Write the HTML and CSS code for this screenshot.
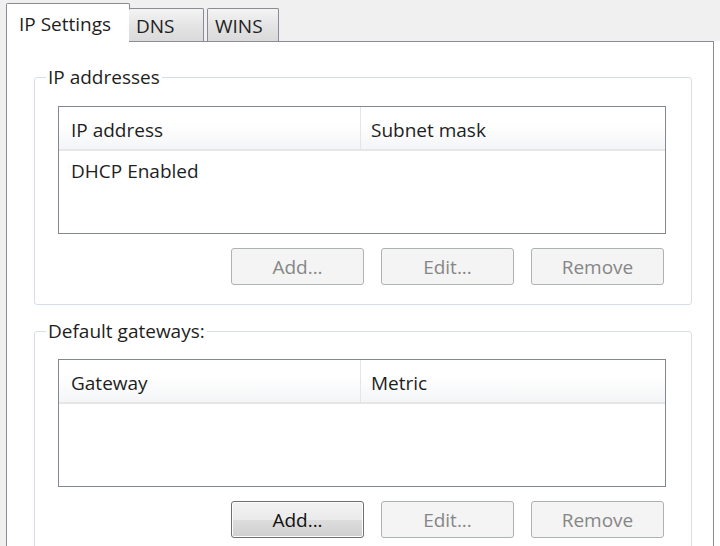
FILE: index.html
```html
<!DOCTYPE html>
<html>
<head>
<meta charset="utf-8">
<link rel="stylesheet" href="styles.css">
</head>
<body>
<div class="window">
  <div class="tabs">
    <div class="tab tab-selected">IP Settings</div>
    <div class="tab tab-dns">DNS</div>
    <div class="tab tab-wins">WINS</div>
  </div>
  <div class="main">
    <div class="panel">
      <fieldset class="group group-ip">
        <legend>IP addresses</legend>
        <div class="list">
          <div class="list-head">
            <div class="col col1">IP address</div>
            <div class="col col2">Subnet mask</div>
          </div>
          <div class="list-body">
            <div class="row">DHCP Enabled</div>
          </div>
        </div>
        <div class="buttons">
          <button class="btn" disabled>Add...</button>
          <button class="btn" disabled>Edit...</button>
          <button class="btn" disabled>Remove</button>
        </div>
      </fieldset>
      <fieldset class="group group-gw">
        <legend>Default gateways:</legend>
        <div class="list">
          <div class="list-head">
            <div class="col col1">Gateway</div>
            <div class="col col2">Metric</div>
          </div>
          <div class="list-body"></div>
        </div>
        <div class="buttons">
          <button class="btn btn-active">Add...</button>
          <button class="btn" disabled>Edit...</button>
          <button class="btn" disabled>Remove</button>
        </div>
      </fieldset>
    </div>
  </div>
</div>
</body>
</html>
```
FILE: styles.css
```css
html, body {
  margin: 0;
  padding: 0;
}
body {
  background: #ffffff;
  font-family: "Open Sans", "Noto Sans", "DejaVu Sans", sans-serif;
  font-size: 19px;
  color: #1e1e1e;
}
.window {
  width: 720px;
  height: 546px;
  overflow: hidden;
  display: flex;
  flex-direction: column;
}
.tabs {
  height: 41px;
  flex: none;
  background: #f0f0f0;
  display: flex;
  align-items: flex-end;
  padding-left: 6px;
  position: relative;
  z-index: 1;
}
.tab {
  box-sizing: border-box;
  height: 33px;
  border: 1px solid #898c95;
  border-bottom: none;
  border-radius: 2px 2px 0 0;
  background: linear-gradient(#f4f4f4, #e3e3e3 55%, #dadada);
  padding-left: 7px;
  line-height: 34px;
  white-space: nowrap;
}
.tab-selected {
  width: 124px;
  height: 39px;
  margin-bottom: -1px;
  background: #ffffff;
  padding-left: 12px;
  line-height: 40px;
}
.tab-dns {
  width: 75px;
  margin-left: -1px;
  border-left: none;
}
.tab-wins {
  width: 72px;
  margin-left: 3px;
}
.main {
  flex: 1;
  background: linear-gradient(90deg, #f0f0f0 0, #f0f0f0 6px, #ffffff 6px);
  padding-left: 6px;
}
.panel {
  box-sizing: border-box;
  width: 708px;
  height: 100%;
  background: #ffffff;
  border: 1px solid #898c95;
  padding-left: 27px;
  padding-top: 24px;
}
.group {
  box-sizing: border-box;
  width: 658px;
  margin: 0;
  padding: 0 0 19px 23px;
  border: 1px solid #d5dfe5;
  border-radius: 3px;
  min-width: 0;
}
.group legend {
  margin-left: -12px;
  padding: 0 2px;
  line-height: 22px;
  color: #1e1e1e;
}
.group-gw {
  margin-top: 15px;
}
.list {
  box-sizing: border-box;
  width: 608px;
  height: 128px;
  margin-top: 18px;
  border: 1px solid #828790;
  background: #ffffff;
}
.group-gw .list {
  margin-top: 17px;
}
.list-head {
  display: flex;
  height: 42px;
  border-bottom: 2px solid #e6e6e6;
  background: linear-gradient(#ffffff, #ffffff 40%, #f4f5f7);
}
.col {
  box-sizing: border-box;
  line-height: 46px;
  padding-left: 12px;
  white-space: nowrap;
}
.col1 {
  width: 302px;
  border-right: 1px solid #e3e5e8;
}
.col2 {
  flex: 1;
  padding-left: 10px;
}
.row {
  padding-left: 12px;
  line-height: 40px;
}
.buttons {
  width: 608px;
  box-sizing: border-box;
  display: flex;
  justify-content: flex-end;
  gap: 17px;
  padding-right: 2px;
  margin-top: 14px;
}
.btn {
  box-sizing: border-box;
  width: 133px;
  height: 37px;
  font-family: inherit;
  font-size: 19px;
  color: #868686;
  background: #f4f4f4;
  border: 1px solid #adb2b5;
  border-radius: 3px;
  padding: 0;
}
.btn-active {
  color: #111111;
  border-color: #707070;
  background: linear-gradient(#f2f2f2, #ebebeb 50%, #dddddd 51%, #cfcfcf);
  box-shadow: inset 0 0 0 1px #fcfcfc;
}
```
